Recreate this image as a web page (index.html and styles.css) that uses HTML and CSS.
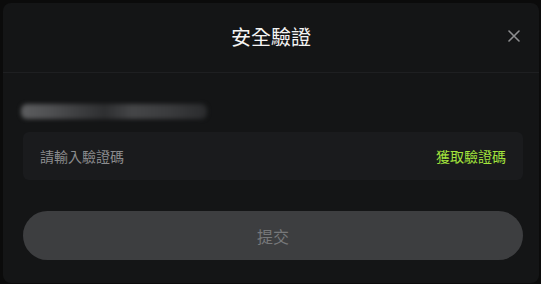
FILE: index.html
```html
<!DOCTYPE html>
<html>
<head>
  <meta charset="utf-8">
  <title>安全驗證</title>
  <link rel="stylesheet" href="styles.css">
</head>
<body>

  <div class="dialog">
    <div class="dialog-header">
      <h2 class="dialog-title">安全驗證</h2>
      <button class="close-btn" aria-label="close">
        <svg width="12" height="12" viewBox="0 0 12 12">
          <path d="M1 1 L11 11 M11 1 L1 11" stroke="#8d8e90" stroke-width="1.6" stroke-linecap="round"/>
        </svg>
      </button>
    </div>

    <div class="dialog-body">
      <div class="account"><span class="masked"></span></div>

      <div class="code-field">
        <input type="text" placeholder="請輸入驗證碼">
        <a class="get-code">獲取驗證碼</a>
      </div>

      <button class="submit-btn" disabled>提交</button>
    </div>
  </div>

</body>
</html>
```

FILE: styles.css
```css
body {
  margin: 0;
  background-color: #0b0b0b;
  font-family: "Noto Sans CJK TC", "Noto Sans", sans-serif;
  color: #fff;
}

.dialog {
  margin: 3px 2px 0 3px;
  height: 280px;
  background: #141516;
  border-radius: 8px;
  box-sizing: border-box;
}

.dialog-header {
  height: 69px;
  border-bottom: 1px solid #1e1f21;
  display: flex;
  align-items: center;
  justify-content: center;
  position: relative;
}

.dialog-title {
  margin: 0 0 2px;
  font-size: 20px;
  font-weight: normal;
  line-height: 24px;
  color: #f4f4f4;
}

.close-btn {
  position: absolute;
  right: 17px;
  top: 25px;
  width: 16px;
  height: 16px;
  padding: 2px;
  background: none;
  border: none;
  cursor: pointer;
  display: flex;
}

.dialog-body {
  padding: 28px 16px 0 20px;
}

.account {
  height: 20px;
  display: flex;
  align-items: center;
}

.masked {
  display: block;
  width: 186px;
  height: 15px;
  margin-left: -2px;
  background: linear-gradient(90deg, #5c5d5f 0%, #505153 15%, #3e3f41 30%, #2e2f31 45%, #454648 60%, #3a3b3d 80%, #2a2b2d 100%);
  filter: blur(2px);
  border-radius: 6px;
}

.code-field {
  margin-top: 11px;
  height: 48px;
  background: #1a1b1d;
  border-radius: 6px;
  display: flex;
  align-items: center;
  padding: 0 17px;
}

.code-field input {
  flex: 1;
  background: transparent;
  border: none;
  outline: none;
  font-family: inherit;
  font-size: 14px;
  color: #ddd;
  padding: 0;
}

.code-field input::placeholder {
  color: #8b8c8e;
}

.get-code {
  font-size: 14px;
  color: #a3e43c;
  cursor: pointer;
}

.submit-btn {
  display: block;
  width: 100%;
  margin-top: 31px;
  height: 49px;
  border: none;
  border-radius: 25px;
  background: #3d3e40;
  color: #77787a;
  font-family: inherit;
  font-size: 16px;
}
```
